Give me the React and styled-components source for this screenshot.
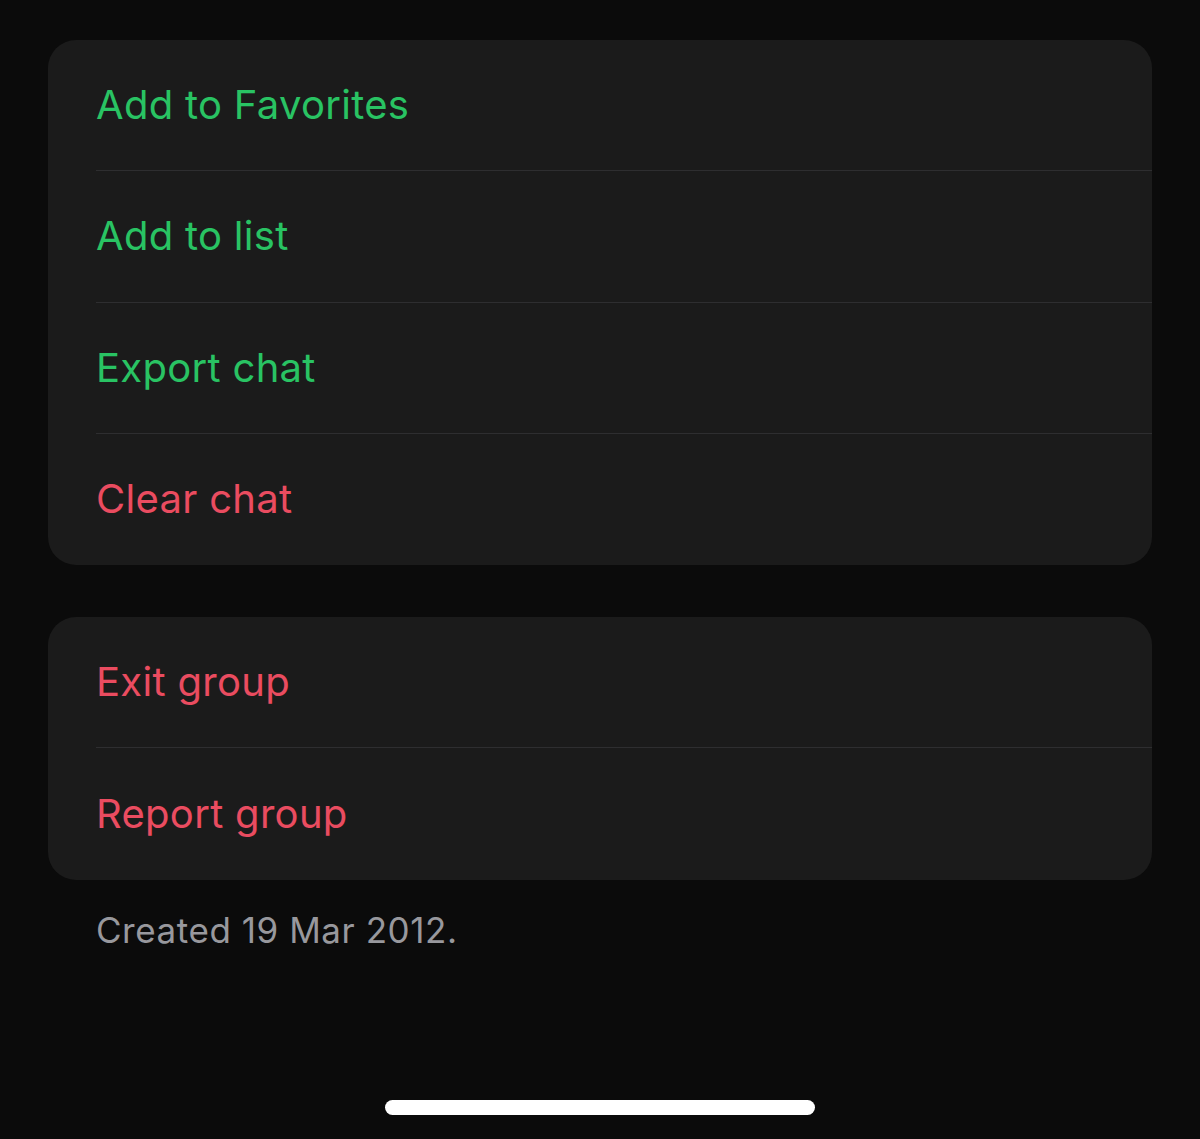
import React from "react";
import styled, { createGlobalStyle } from "styled-components";

const Global = createGlobalStyle`
  html, body { margin: 0; padding: 0; background: #0b0b0b; }
  body { font-family: Inter, "Open Sans", "Liberation Sans", sans-serif; }
`;

const Screen = styled.div`
  width: 1200px;
  height: 1139px;
  background: #0b0b0b;
  box-sizing: border-box;
  padding: 40px 48px 0;
  display: flex;
  flex-direction: column;
  position: relative;
`;

const Card = styled.div`
  background: #1b1b1b;
  border-radius: 28px;
  overflow: hidden;
  flex-shrink: 0;
  margin-bottom: ${(p) => p.$mb || 0}px;
`;

const Row = styled.div`
  height: 131.25px;
  margin-left: 48px;
  padding-bottom: 1px;
  display: flex;
  align-items: center;
  box-sizing: border-box;
  border-bottom: ${(p) => (p.$last ? "none" : "1px solid #2e2e30")};
  font-size: 40px;
  letter-spacing: 0.3px;
  color: ${(p) => (p.$danger ? "#ea4c60" : "#29c363")};
`;

const Footer = styled.div`
  padding: 29px 0 0 48px;
  font-size: 35px;
  letter-spacing: 0.55px;
  color: #98989d;
`;

const Indicator = styled.div`
  position: absolute;
  left: 385px;
  top: 1100px;
  width: 430px;
  height: 15px;
  border-radius: 8px;
  background: #ffffff;
`;

export default function App() {
  return (
    <>
      <Global />
      <Screen>
        <Card $mb={52}>
          <Row>Add to Favorites</Row>
          <Row>Add to list</Row>
          <Row>Export chat</Row>
          <Row $danger $last>Clear chat</Row>
        </Card>
        <Card>
          <Row $danger>Exit group</Row>
          <Row $danger $last>Report group</Row>
        </Card>
        <Footer>Created 19 Mar 2012.</Footer>
        <Indicator />
      </Screen>
    </>
  );
}
